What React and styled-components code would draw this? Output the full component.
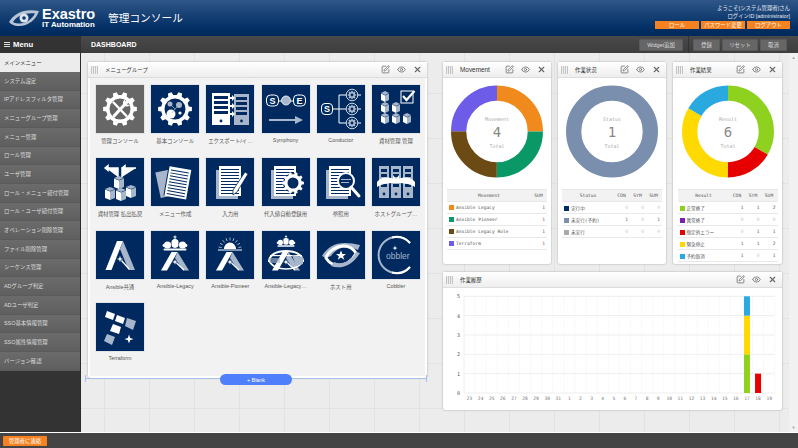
import React from 'react';
import styled, { createGlobalStyle } from 'styled-components';
import { SquarePen, Eye, X } from 'lucide-react';

const SANS = `"Liberation Sans", "Noto Sans CJK JP", sans-serif`;
const MONO = `"DejaVu Sans Mono", "Noto Sans CJK JP", monospace`;
const NAVY = '#002a5f';
const LIGHT = '#a8b6cc';
const WHITE = '#fff';

const GlobalStyle = createGlobalStyle`
  html, body { margin: 0; padding: 0; overflow: hidden; background: #444; }
  * { box-sizing: border-box; }
`;

const Page = styled.div`
  width: 798px;
  height: 448px;
  display: flex;
  flex-direction: column;
  font-family: ${SANS};
  font-size: 5.4px;
`;

const Header = styled.header`
  height: 36px;
  flex: none;
  display: flex;
  justify-content: space-between;
  background: linear-gradient(#2f5687, #033066 75%, #02295a);
  color: #fff;
`;
const Brand = styled.div`
  display: flex;
  align-items: center;
  padding-left: 8px;
`;
const BrandText = styled.div`
  margin-left: 2px;
  font-weight: bold;
  width: 66px;
`;
const BrandName = styled.div`
  font-size: 14.5px;
  line-height: 13px;
  height: 13px;
`;
const BrandStarO = styled.span`
  position: relative;
  &::after {
    content: '★';
    position: absolute;
    left: 2.4px;
    top: 3.6px;
    font: 4px/1 "DejaVu Sans", sans-serif;
    color: #0d3a72;
  }
`;
const BrandSub = styled.div`
  font-size: 7.9px;
  line-height: 8px;
`;
const AppTitle = styled.div`
  font-size: 10.7px;
  margin-top: -1px;
`;
const UserBox = styled.div`
  display: flex;
  flex-direction: column;
  align-items: flex-end;
  padding: 4px 8px 0 0;
  line-height: 8px;
  color: #e4e9f1;
`;
const UserButtons = styled.div`
  display: flex;
  gap: 2px;
  margin-top: 1px;
`;
const OrangeButton = styled.div`
  width: ${p => p.$w}px;
  height: ${p => p.$h}px;
  background: #f5821f;
  color: #fff;
  border-radius: ${p => p.$r || 0}px;
  display: flex;
  align-items: center;
  justify-content: center;
`;

const NavBar = styled.div`
  height: 17px;
  flex: none;
  display: flex;
  background: linear-gradient(#4a4a4a, #3d3d3d);
  color: #fff;
`;
const MenuTitle = styled.div`
  width: 81px;
  display: flex;
  align-items: center;
  gap: 3px;
  padding-left: 4px;
  font-size: 7.7px;
  font-weight: bold;
  background: #333;
`;
const Burger = styled.span`
  width: 6px;
  height: 5px;
  border-top: 1px solid #ddd;
  border-bottom: 1px solid #ddd;
  background: linear-gradient(#ddd, #ddd) center / 100% 1px no-repeat;
`;
const PageName = styled.div`
  flex: 1;
  display: flex;
  align-items: center;
  padding-left: 10px;
  font-size: 7px;
  font-weight: bold;
`;
const ToolGroup = styled.div`
  display: flex;
  align-items: center;
  gap: 2px;
  height: 100%;
  padding: 0 ${p => p.$pr}px 0 ${p => p.$pl}px;
  border-left: ${p => (p.$divided ? '1px solid #333' : 'none')};
`;
const ToolButton = styled.div`
  width: ${p => p.$w}px;
  height: 12px;
  display: flex;
  align-items: center;
  justify-content: center;
  background: #666;
  color: #ddd;
  border: 1px solid #5a5a5a;
  border-radius: 1px;
`;

const Body = styled.div`
  flex: 1;
  min-height: 0;
  display: flex;
`;
const Sidebar = styled.nav`
  width: 81px;
  flex: none;
  background: #333;
  border-right: 1px solid #2c2c2c;
`;
const MainMenuItem = styled.div`
  height: 19px;
  display: flex;
  align-items: center;
  padding-left: 4px;
  background: #ececec;
  color: #333;
`;
const SideItem = styled.div`
  height: 18.67px;
  display: flex;
  align-items: center;
  padding-left: 4px;
  background: linear-gradient(#6b6b6b, #5f5f5f);
  border-bottom: 1px solid #5a5a5a;
  color: #ddd;
  white-space: nowrap;
`;
const Main = styled.main`
  flex: 1;
  display: flex;
  gap: 16px;
  padding: 9px 0 0 7px;
  background-color: #ececec;
  background-image: linear-gradient(#e2e2e2 1px, transparent 1px),
    linear-gradient(90deg, #e2e2e2 1px, transparent 1px);
  background-size: 45px 45px;
  background-position: 23px 40px;
`;
const ScrollBar = styled.div`
  width: 9px;
  flex: none;
  background: #f1f1f1;
  color: #999;
  font-size: 4px;
  display: flex;
  flex-direction: column;
  justify-content: space-between;
  align-items: center;
  padding: 2px 0;
`;
const Footer = styled.footer`
  height: 16px;
  flex: none;
  display: flex;
  align-items: center;
  padding-left: 3px;
  background: #444;
  border-top: 1px solid #fff;
  color: #fff;
`;

const MenuSelection = styled.div`
  position: relative;
  width: 339px;
  height: 316px;
  flex: none;
`;
const Panel = styled.section`
  width: ${p => (p.$w ? `${p.$w}px` : 'auto')};
  height: ${p => (p.$h ? `${p.$h}px` : 'auto')};
  flex: none;
  display: flex;
  flex-direction: column;
  background: #fff;
  border-radius: 2px;
  box-shadow: 0 0 2px rgba(0, 0, 0, 0.35);
`;
const PanelHead = styled.div`
  height: 16px;
  flex: none;
  display: flex;
  align-items: center;
  padding: 0 5px 0 3px;
  background: linear-gradient(#fff, #eee);
  border-bottom: 1px solid #ddd;
  color: #333;
`;
const Grip = styled.span`
  width: 7px;
  height: 8px;
  margin-right: 7px;
  background: repeating-linear-gradient(90deg, #c4c4c4 0 1px, #eee 1px 2px);
`;
const PanelTitle = styled.div`
  flex: 1;
  font-size: ${p => p.$size || 5.4}px;
  white-space: nowrap;
`;
const PanelIcons = styled.div`
  display: flex;
  align-items: center;
  gap: 7px;
  color: #666;
`;
const TileGrid = styled.div`
  flex: 1;
  display: grid;
  grid-template-columns: repeat(6, 48px);
  grid-auto-rows: 72.8px;
  column-gap: 7.2px;
  padding: 7px 0 0 6px;
  margin: 0 2px 2px;
  background: #f2f2f2;
`;
const Tile = styled.div`
  width: 48px;
`;
const TileFace = styled.div`
  width: 48px;
  height: 48px;
  background: ${p => (p.$grey ? '#666' : NAVY)};
  box-shadow: 0 0 0 0.5px #cfd5dd;
  svg { display: block; }
`;
const TileLabel = styled.div`
  width: 55px;
  margin: 4px 0 0 -3.5px;
  text-align: center;
  color: #555;
  white-space: nowrap;
  overflow: hidden;
  text-overflow: ellipsis;
`;
const SelectionLine = styled.div`
  position: absolute;
  left: -3px;
  right: 0;
  bottom: -1px;
  height: 1px;
  background: #a9bfe8;
  &::before, &::after {
    content: '';
    position: absolute;
    top: -3px;
    width: 1px;
    height: 7px;
    background: #a9bfe8;
  }
  &::before { left: 0; }
  &::after { right: 0; }
`;
const BlankButton = styled.div`
  position: absolute;
  left: 132px;
  bottom: -7px;
  width: 72px;
  height: 11px;
  display: flex;
  align-items: center;
  justify-content: center;
  border-radius: 6px;
  background: #4f7ffb;
  color: #fff;
`;

const Column = styled.div`
  width: 339px;
  flex: none;
  display: flex;
  flex-direction: column;
  gap: 8px;
`;
const WidgetRow = styled.div`
  display: flex;
  gap: 7px;
`;
const WidgetBody = styled.div`
  flex: 1;
  display: flex;
  flex-direction: column;
  align-items: center;
  padding-top: 7px;
  svg { display: block; }
`;
const Legend = styled.table`
  width: 100px;
  margin-top: 11px;
  border-collapse: collapse;
  table-layout: fixed;
  font-family: ${MONO};
  font-size: 4.6px;
  color: #555;
`;
const LegendHead = styled.th`
  height: 12px;
  padding: 0 ${p => (p.$num ? 1 : 0)}px 0 0;
  width: ${p => (p.$num ? '16px' : 'auto')};
  font-weight: normal;
  text-align: center;
  background: #f2f2f2;
  border-top: 1px solid #e6e6e6;
`;
const LegendRow = styled.tr`
  height: 12px;
  border-top: 1px solid #e8e8e8;
  border-bottom: 1px solid #e8e8e8;
`;
const LegendName = styled.td`
  padding: 0 0 0 2px;
  white-space: nowrap;
  font-family: ${MONO};
`;
const Swatch = styled.span`
  display: inline-block;
  width: 5px;
  height: 5px;
  margin-right: 2px;
  vertical-align: -1px;
  background: ${p => p.$color};
`;
const LegendValue = styled.td`
  padding: 0 2px 0 0;
  text-align: right;
  color: ${p => (p.$zero ? '#ccc' : '#555')};
`;

const gearPath = (cx, cy, outer, root, hole, teeth) => {
  const pts = [];
  const step = (Math.PI * 2) / teeth;
  for (let i = 0; i < teeth; i++) {
    const a = i * step;
    [[-0.3, root], [-0.18, outer], [0.18, outer], [0.3, root]].forEach(([o, r]) => {
      pts.push(`${(cx + r * Math.cos(a + o * step)).toFixed(2)} ${(cy + r * Math.sin(a + o * step)).toFixed(2)}`);
    });
  }
  const ring = `M${cx - hole} ${cy}a${hole} ${hole} 0 1 0 ${hole * 2} 0a${hole} ${hole} 0 1 0 ${-hole * 2} 0Z`;
  return `M${pts.join('L')}Z${ring}`;
};

const Gear = ({ cx = 24, cy = 24, outer = 17, root = 14, hole = 10.5, teeth = 10, fill = WHITE }) => (
  <path d={gearPath(cx, cy, outer, root, hole, teeth)} fill={fill} fillRule="evenodd" />
);

const Sparkle = ({ x, y, r = 3, fill = WHITE }) => (
  <path
    d={`M${x} ${y - r}L${x + r * 0.25} ${y - r * 0.25}L${x + r} ${y}L${x + r * 0.25} ${y + r * 0.25}L${x} ${y + r}L${x - r * 0.25} ${y + r * 0.25}L${x - r} ${y}L${x - r * 0.25} ${y - r * 0.25}Z`}
    fill={fill}
  />
);

const Cube = ({ x, y, s = 7, fill = WHITE }) => (
  <g>
    <path d={`M${x} ${y + 2}L${x + s / 2} ${y}L${x + s} ${y + 2}L${x + s / 2} ${y + 4}Z`} fill={LIGHT} />
    <path d={`M${x} ${y + 2.6}L${x + s / 2} ${y + 4.6}V${y + s + 3}L${x} ${y + s + 1}Z`} fill={fill} />
    <path d={`M${x + s} ${y + 2.6}L${x + s / 2} ${y + 4.6}V${y + s + 3}L${x + s} ${y + s + 1}Z`} fill={LIGHT} />
  </g>
);

const Doc = ({ x, y, w = 20, h = 26, lines = 7 }) => (
  <g>
    <rect x={x} y={y} width={w} height={h} fill={WHITE} />
    {Array.from({ length: lines }, (_, i) => (
      <rect key={i} x={x + 2} y={y + 3 + i * 3} width={w - 4} height="1" fill={NAVY} />
    ))}
  </g>
);

// plain A: full height, thin legs
const AMark = () => (
  <g>
    <path d="M21 10H27L15.5 39H9.5Z" fill={WHITE} />
    <path d="M27 10L39 39H32.5L24 18Z" fill={LIGHT} />
    <Sparkle x={24} y={28} r={3.2} />
    <path d="M25.5 29.5L33 38" stroke={WHITE} strokeWidth="1.3" />
  </g>
);

// shorter A, sits under a crown or sun
const ShortA = () => (
  <g>
    <path d="M20.5 21H26.5L16 39.5H10Z" fill={WHITE} />
    <path d="M26.5 21L38 39.5H32L24 27Z" fill={LIGHT} />
    <Sparkle x={24} y={31} r={2.8} />
    <path d="M25.5 32L33 39" stroke={WHITE} strokeWidth="1.2" />
  </g>
);

const Crown = ({ dy = 0, s = 1 }) => (
  <g transform={`translate(24 ${dy}) scale(${s}) translate(-24 0)`}>
    <path d="M24 4.5V9M22.5 6H25.5" stroke={WHITE} strokeWidth="1" />
    <circle cx="24" cy="12.5" r="4.4" fill={WHITE} />
    <circle cx="16.5" cy="14" r="3.6" fill={WHITE} />
    <circle cx="31.5" cy="14" r="3.6" fill={WHITE} />
    <circle cx="13" cy="14.5" r="1.4" fill={WHITE} />
    <circle cx="35" cy="14.5" r="1.4" fill={WHITE} />
    <path d="M20.4 9.5V16.5M27.6 9.5V16.5" stroke={NAVY} strokeWidth="0.6" />
    <rect x="12.5" y="17.5" width="23" height="2" rx="1" fill={WHITE} />
  </g>
);

const EyeMark = ({ star = true }) => (
  <g>
    <path d="M5 25C12 13 24 9 43 14L41 19C30 14 20 16 14 25L9 27Z" fill={LIGHT} />
    <path d="M9 27C10 22 18 15 27 15C33 15 37 19 39 22C36 30 27 36 18 34C14 33 11 30 9 27Z" fill="none" stroke={WHITE} strokeWidth="3" />
    <path d="M43 22C36 34 24 39 14 35L17 31C26 35 35 29 39 21Z" fill={LIGHT} />
    {star && <path d="M24 19.5L25.4 23H29L26.1 25.2L27.2 28.8L24 26.6L20.8 28.8L21.9 25.2L19 23H22.6Z" fill={WHITE} />}
  </g>
);

const Svg = ({ children, size = 48, view = 48 }) => (
  <svg width={size} height={size} viewBox={`0 0 ${view} ${view}`}>{children}</svg>
);

const Rack = ({ x, y, w, h, fill, stripe }) => (
  <g>
    <rect x={x} y={y} width={w} height={h} fill={fill} />
    {[3, 8, 13, 18].map(o => (
      <rect key={o} x={x + 2} y={y + o} width={w - 4} height="3" fill={stripe} />
    ))}
    <circle cx={x + w / 2} cy={y + h - 4} r="1.4" fill={stripe} />
  </g>
);

const ICONS = {
  admin: (
    <Svg>
      <Gear />
      <path d="M18 31L31 17" stroke={WHITE} strokeWidth="3.2" strokeLinecap="round" />
      <path d="M17.5 17.5L30.5 31" stroke={WHITE} strokeWidth="2.4" strokeLinecap="round" />
      <path d="M28.5 14.5A4.5 4.5 0 0 0 28 20.5A4.5 4.5 0 0 0 34 20L31 19.5L30 17Z" fill={WHITE} />
    </Svg>
  ),
  basic: (
    <Svg>
      <Gear />
      <circle cx="20" cy="29" r="4.5" fill={WHITE} />
      <circle cx="19" cy="19" r="2.5" fill={LIGHT} />
      <circle cx="28" cy="20" r="3" fill={LIGHT} />
      <circle cx="29" cy="28" r="1.6" fill={WHITE} />
      <path d="M19 19L24 24L28 20M24 24L21 28" stroke={LIGHT} strokeWidth="0.7" fill="none" />
    </Svg>
  ),
  exportImport: (
    <Svg>
      <Rack x={6} y={8} w={18} h={32} fill={WHITE} stripe={NAVY} />
      <Rack x={28} y={9} w={15} h={31} fill={LIGHT} stripe={NAVY} />
      {[12, 20, 28].map(y => (
        <path key={y} d={`M24 ${y}h2v-2l3 3l-3 3v-2h-2Z`} fill={WHITE} />
      ))}
    </Svg>
  ),
  symphony: (
    <Svg>
      <path d="M11 16H37" stroke={WHITE} strokeWidth="1" />
      <rect x="4.5" y="10" width="12" height="11" rx="4" fill={NAVY} stroke={WHITE} strokeWidth="1" />
      <text x="10.5" y="18.5" fontSize="9" fontWeight="bold" textAnchor="middle" fill={WHITE} fontFamily={SANS}>S</text>
      <circle cx="24" cy="15.5" r="4.5" fill={LIGHT} stroke={WHITE} strokeWidth="0.8" />
      <rect x="31.5" y="10" width="12" height="11" rx="4" fill={NAVY} stroke={WHITE} strokeWidth="1" />
      <text x="37.5" y="18.5" fontSize="9" fontWeight="bold" textAnchor="middle" fill={WHITE} fontFamily={SANS}>E</text>
      <path d="M7 34H33V31L41 35L33 39V36H7Z" fill={LIGHT} />
    </Svg>
  ),
  conductor: (
    <Svg>
      <rect x="4.5" y="18.5" width="11" height="11" rx="3.5" fill={NAVY} stroke={WHITE} strokeWidth="1" />
      <text x="10" y="27" fontSize="9" fontWeight="bold" textAnchor="middle" fill={WHITE} fontFamily={SANS}>S</text>
      <path d="M15.5 24H30M22 10V38M22 10H30M22 38H30M37 10h7M37 24h7M37 38h7" stroke={WHITE} strokeWidth="1" fill="none" />
      {[10, 24, 38].map(y => (
        <g key={y}>
          <circle cx="35" cy={y} r="5.8" fill={NAVY} stroke={WHITE} strokeWidth="0.8" />
          <Gear cx={35} cy={y} outer={4.4} root={3.4} hole={1.4} teeth={8} fill={LIGHT} />
        </g>
      ))}
    </Svg>
  ),
  materials: (
    <Svg>
      <Cube x={9} y={6} s={8} />
      <Cube x={9} y={17} s={8} />
      <Cube x={9} y={28} s={8} />
      <Cube x={20} y={17} s={8} />
      <Cube x={20} y={28} s={8} />
      <Cube x={31} y={28} s={8} />
      <rect x="29" y="6" width="12" height="12" fill="none" stroke={WHITE} strokeWidth="1" />
      <path d="M31 11l3.5 4l8 -9" stroke={WHITE} strokeWidth="2.2" fill="none" />
    </Svg>
  ),
  materialsOut: (
    <Svg>
      <path d="M22 19V10H10M9 10l3 -2.5v5Z" stroke={WHITE} strokeWidth="1.5" fill={WHITE} />
      <path d="M26 19V10H40M26 10l3 -2.5v5Z" stroke={WHITE} strokeWidth="1.5" fill={WHITE} />
      <Cube x={18} y={18} s={10} />
      <Cube x={9} y={29} s={10} />
      <Cube x={20} y={30} s={10} />
      <Cube x={30} y={27} s={10} />
    </Svg>
  ),
  menuCreate: (
    <Svg>
      <g transform="rotate(-12 18 26)"><rect x="7" y="12" width="20" height="26" fill={LIGHT} /></g>
      <g transform="rotate(10 28 24)"><rect x="15" y="9" width="23" height="31" fill={NAVY} /><Doc x={16} y={10} w={22} h={30} lines={9} /></g>
    </Svg>
  ),
  input: (
    <Svg>
      <rect x="10" y="12" width="22" height="29" fill={LIGHT} />
      <Doc x={13} y={8} w={22} h={30} lines={9} />
      <path d="M39 14l3 2l-11 18l-4 3l0 -5z" fill={WHITE} stroke={NAVY} strokeWidth="0.8" />
    </Svg>
  ),
  substitute: (
    <Svg>
      <rect x="9" y="12" width="22" height="29" fill={LIGHT} />
      <Doc x={12} y={8} w={22} h={30} lines={9} />
      <circle cx="31" cy="25" r="10" fill={NAVY} />
      <Gear cx={31} cy={25} outer={11} root={8.8} hole={5.5} teeth={10} />
    </Svg>
  ),
  reference: (
    <Svg>
      <rect x="9" y="12" width="22" height="29" fill={LIGHT} />
      <Doc x={12} y={8} w={22} h={30} lines={9} />
      <circle cx="29" cy="23" r="8" fill={NAVY} stroke={WHITE} strokeWidth="2" />
      <rect x="24" y="21" width="10" height="1" fill={LIGHT} />
      <rect x="24" y="24" width="8" height="1" fill={LIGHT} />
      <path d="M34 29L42 38" stroke={WHITE} strokeWidth="3" strokeLinecap="round" />
    </Svg>
  ),
  hostGroup: (
    <Svg>
      <Rack x={7} y={8} w={10} h={32} fill={LIGHT} stripe={NAVY} />
      <Rack x={19} y={8} w={10} h={32} fill={LIGHT} stripe={NAVY} />
      <Rack x={31} y={8} w={10} h={32} fill={LIGHT} stripe={NAVY} />
      <path d="M5 24C10 18 19 19 24 22C29 19 38 18 43 24V29C37 25 29 25 24 25C19 25 11 25 5 29Z" fill={WHITE} />
      <path d="M21 17l3 4l3 -4l0 6l-3 -1l-3 1z" fill={WHITE} />
    </Svg>
  ),
  ansible: <Svg><AMark /></Svg>,
  legacy: (
    <Svg>
      <Crown />
      <ShortA />
    </Svg>
  ),
  pioneer: (
    <Svg>
      <path d="M18 18a6 6.5 0 0 1 12 0Z" fill={WHITE} />
      {[-80, -60, -40, -20, 0, 20, 40, 60, 80].map(a => (
        <path key={a} d="M24 6.5V9.5" stroke={WHITE} strokeWidth="0.6" transform={`rotate(${a} 24 18)`} />
      ))}
      <rect x="12" y="18.5" width="24" height="1" fill={WHITE} />
      <ShortA />
    </Svg>
  ),
  legacyRole: (
    <Svg>
      <Crown dy={1} s={0.75} />
      <ShortA />
      <path d="M7 31C7 24 14 20 24 20C34 20 41 24 41 31" fill="none" stroke={WHITE} strokeWidth="2" />
      <path d="M7 29C9 36 18 38 24 38C30 38 39 36 41 29" fill="none" stroke={WHITE} strokeWidth="1.6" />
      <rect x="8" y="24" width="32" height="1.2" fill={WHITE} />
      <path d="M30 24L41 26V33L34 35Z" fill={LIGHT} />
      <path d="M7 27H18V32H8Z" fill={LIGHT} opacity="0.6" />
    </Svg>
  ),
  host: <Svg><EyeMark /></Svg>,
  cobbler: (
    <Svg>
      <path d="M38 12A18 18 0 1 0 38 36" fill="none" stroke={LIGHT} strokeWidth="2" />
      <path d="M38 12A18 18 0 0 0 20 6.5" fill="none" stroke={WHITE} strokeWidth="2" />
      <path d="M38 36A18 18 0 0 1 20 41.5" fill="none" stroke={WHITE} strokeWidth="2" />
      <text x="14" y="28" fontSize="8.5" fill={LIGHT} fontFamily={SANS}>obbler</text>
      <Sparkle x={23} y={17} r={2.5} />
    </Svg>
  ),
  terraform: (
    <Svg>
      <path d="M11 8L19 11L17 17L9 14Z" fill={WHITE} />
      <path d="M21 12L29 15L27 21L19 18Z" fill={WHITE} />
      <path d="M31 15L40 18L37 27L29 23Z" fill={LIGHT} />
      <path d="M17 21L25 24L23 31L14 28Z" fill={WHITE} />
      <path d="M11 31L19 34L16 42L8 38Z" fill={LIGHT} />
      <Sparkle x={33} y={36} r={4.5} />
    </Svg>
  ),
};

const TILES = [
  ['管理コンソール', 'admin', true],
  ['基本コンソール', 'basic'],
  ['エクスポート/イ…', 'exportImport'],
  ['Symphony', 'symphony'],
  ['Conductor', 'conductor'],
  ['資材管理 管理', 'materials'],
  ['資材管理 払出払戻', 'materialsOut'],
  ['メニュー作成', 'menuCreate'],
  ['入力用', 'input'],
  ['代入値自動登録用', 'substitute'],
  ['参照用', 'reference'],
  ['ホストグループ…', 'hostGroup'],
  ['Ansible共通', 'ansible'],
  ['Ansible-Legacy', 'legacy'],
  ['Ansible-Pioneer', 'pioneer'],
  ['Ansible-Legacy…', 'legacyRole'],
  ['ホスト用', 'host'],
  ['Cobbler', 'cobbler'],
  ['Terraform', 'terraform'],
];

const SIDE_ITEMS = [
  'システム設定', 'IPアドレスフィルタ管理', 'メニューグループ管理', 'メニュー管理', 'ロール管理', 'ユーザ管理',
  'ロール・メニュー紐付管理', 'ロール・ユーザ紐付管理', 'オペレーション削除管理', 'ファイル削除管理', 'シーケンス管理',
  'ADグループ判定', 'ADユーザ判定', 'SSO基本情報管理', 'SSO属性情報管理', 'バージョン確認',
];

const C = {
  orange: '#f08a1d', green: '#0a9966', brown: '#6b4a14', purple: '#6c5ce7',
  navy: '#002b62', slate: '#7a8fae', grey: '#aaa',
  lime: '#8fd11f', violet: '#7a1fb0', red: '#e60000', yellow: '#ffd900', sky: '#2aa9e0',
};

const WIDGETS = [
  {
    title: 'Movement', w: 108, size: 6.4, name: 'Movement', total: 4, nums: ['SUM'],
    rows: [
      ['Ansible Legacy', C.orange, [1], 1],
      ['Ansible Pioneer', C.green, [1], 1],
      ['Ansible Legacy Role', C.brown, [1], 1],
      ['Terraform', C.purple, [1], 1],
    ],
  },
  {
    title: '作業状況', w: 108, name: 'Status', total: 1, nums: ['CON', 'SYM', 'SUM'],
    rows: [
      ['実行中', C.navy, [0, 0, 0], 0],
      ['未実行(予約)', C.slate, [1, 0, 1], 1],
      ['未実行', C.grey, [0, 0, 0], 0],
    ],
  },
  {
    title: '作業結果', w: 109, name: 'Result', total: 6, nums: ['CON', 'SYM', 'SUM'],
    rows: [
      ['正常終了', C.lime, [1, 1, 2], 2],
      ['異常終了', C.violet, [0, 0, 0], 0],
      ['想定外エラー', C.red, [0, 1, 1], 1],
      ['緊急停止', C.yellow, [1, 1, 2], 2],
      ['予約取消', C.sky, [1, 0, 1], 1],
    ],
  },
];

const PanelTools = () => (
  <PanelIcons>
    <SquarePen size={9} strokeWidth={2} />
    <Eye size={9} strokeWidth={2} />
    <X size={9} strokeWidth={3} />
  </PanelIcons>
);

const Donut = ({ rows, name, total }) => {
  const r = 38.35;
  const circ = 2 * Math.PI * r;
  let offset = 0;
  return (
    <svg width="92" height="93" viewBox="0 0 92 93">
      {rows.filter(row => row[3] > 0).map(([label, color, , value]) => {
        const len = (value / total) * circ;
        const seg = (
          <circle
            key={label}
            cx="46"
            cy="46.5"
            r={r}
            fill="none"
            stroke={color}
            strokeWidth="15.3"
            strokeDasharray={`${len} ${circ - len}`}
            strokeDashoffset={-offset}
            transform="rotate(-90 46 46.5)"
          />
        );
        offset += len;
        return seg;
      })}
      <g fontFamily={MONO} textAnchor="middle" fill="#aaa">
        <text x="46" y="35.5" fontSize="5">{name}</text>
        <text x="46" y="52" fontSize="14" fill="#888">{total}</text>
        <text x="46" y="63" fontSize="5">Total</text>
      </g>
    </svg>
  );
};

const Widget = ({ title, w, size, name, total, nums, rows }) => (
  <Panel $w={w} $h={202}>
    <PanelHead>
      <Grip />
      <PanelTitle $size={size}>{title}</PanelTitle>
      <PanelTools />
    </PanelHead>
    <WidgetBody>
      <Donut rows={rows} name={name} total={total} />
      <Legend>
        <thead>
          <tr>
            <LegendHead>{name}</LegendHead>
            {nums.map(n => <LegendHead key={n} $num>{n}</LegendHead>)}
          </tr>
        </thead>
        <tbody>
          {rows.map(([label, color, values]) => (
            <LegendRow key={label}>
              <LegendName><Swatch $color={color} />{label}</LegendName>
              {values.map((v, i) => <LegendValue key={i} $zero={v === 0}>{v}</LegendValue>)}
            </LegendRow>
          ))}
        </tbody>
      </Legend>
    </WidgetBody>
  </Panel>
);

const DAYS = [23, 24, 25, 26, 27, 28, 29, 30, 31, 1, 2, 3, 4, 5, 6, 7, 8, 9, 10, 11, 12, 13, 14, 15, 16, 17, 18, 19];

const HistoryChart = () => {
  const left = 21;
  const right = 331.7;
  const zero = 105;
  const unit = 19.34;
  const step = (right - left) / DAYS.length;
  const x17 = left + step * 25.5 - 3;
  const x18 = left + step * 26.5 - 3;
  return (
    <svg width="338" height="121" viewBox="0 0 338 121">
      {DAYS.map((d, i) => (
        <g key={i}>
          <path d={`M${left + step * (i + 1)} ${zero - unit * 5}V${zero}`} stroke="#eee" strokeWidth="0.7" strokeDasharray="1.5 1.5" />
          <text x={left + step * (i + 0.5)} y={zero + 7} fontSize="4.6" textAnchor="middle" fill="#777" fontFamily={MONO}>{d}</text>
        </g>
      ))}
      {[0, 1, 2, 3, 4, 5].map(v => (
        <g key={v}>
          <path d={`M${left} ${zero - v * unit}H${right}`} stroke="#eee" strokeWidth="1" />
          <text x={left - 4} y={zero - v * unit + 2} fontSize="5" textAnchor="end" fill="#555" fontFamily={MONO}>{v}</text>
        </g>
      ))}
      <path d={`M${left} ${zero - 5 * unit}V${zero}`} stroke="#eee" strokeWidth="1" />
      <rect x={x17} y={zero - unit * 2} width="6" height={unit * 2} fill={C.lime} />
      <rect x={x17} y={zero - unit * 4} width="6" height={unit * 2} fill={C.yellow} />
      <rect x={x17} y={zero - unit * 5} width="6" height={unit} fill={C.sky} />
      <rect x={x18} y={zero - unit} width="6" height={unit} fill={C.red} />
    </svg>
  );
};

const ChartBody = styled.div`
  flex: 1;
  svg { display: block; }
`;

export default function App() {
  return (
    <Page>
      <GlobalStyle />
      <Header>
        <Brand>
          <svg width="32" height="24" viewBox="0 0 32 24">
            <path d="M1 16C6 7 17 2 31 5C28 14 19 21 9 20C5 19.5 3 18 1 16Z" fill="#b9c4d4" />
            <path d="M5 16C9 10 17 6.5 27 7.5C24 13 18 18 10 17.5C8 17.3 6.5 17 5 16Z" fill="#0d3a72" />
            <circle cx="16" cy="12" r="4.5" fill="#dfe5ee" />
            <circle cx="16" cy="12" r="1.8" fill="#0d3a72" />
          </svg>
          <BrandText>
            <BrandName>Exastr<BrandStarO>o</BrandStarO></BrandName>
            <BrandSub>IT Automation</BrandSub>
          </BrandText>
          <AppTitle>管理コンソール</AppTitle>
        </Brand>
        <UserBox>
          <div>ようこそ[システム管理者]さん</div>
          <div>ログインID [administrator]</div>
          <UserButtons>
            <OrangeButton $w={44} $h={8}>ロール</OrangeButton>
            <OrangeButton $w={44} $h={8}>パスワード変更</OrangeButton>
            <OrangeButton $w={43} $h={8}>ログアウト</OrangeButton>
          </UserButtons>
        </UserBox>
      </Header>
      <NavBar>
        <MenuTitle><Burger />Menu</MenuTitle>
        <PageName>DASHBOARD</PageName>
        <ToolGroup $pl={0} $pr={5}>
          <ToolButton $w={44}>Widget追加</ToolButton>
        </ToolGroup>
        <ToolGroup $divided $pl={4} $pr={11}>
          <ToolButton $w={27}>登録</ToolButton>
          <ToolButton $w={36}>リセット</ToolButton>
          <ToolButton $w={27}>取消</ToolButton>
        </ToolGroup>
      </NavBar>
      <Body>
        <Sidebar>
          <MainMenuItem>メインメニュー</MainMenuItem>
          {SIDE_ITEMS.map(item => <SideItem key={item}>{item}</SideItem>)}
        </Sidebar>
        <Main>
          <MenuSelection>
            <Panel $h={316}>
              <PanelHead>
                <Grip />
                <PanelTitle>メニューグループ</PanelTitle>
                <PanelTools />
              </PanelHead>
              <TileGrid>
                {TILES.map(([label, icon, grey]) => (
                  <Tile key={label}>
                    <TileFace $grey={grey}>{ICONS[icon]}</TileFace>
                    <TileLabel>{label}</TileLabel>
                  </Tile>
                ))}
              </TileGrid>
            </Panel>
            <SelectionLine />
            <BlankButton>+ Blank</BlankButton>
          </MenuSelection>
          <Column>
            <WidgetRow>
              {WIDGETS.map(w => <Widget key={w.name} {...w} />)}
            </WidgetRow>
            <Panel $h={138}>
              <PanelHead>
                <Grip />
                <PanelTitle>作業履歴</PanelTitle>
                <PanelTools />
              </PanelHead>
              <ChartBody><HistoryChart /></ChartBody>
            </Panel>
          </Column>
        </Main>
        <ScrollBar>
          <span>▲</span>
          <span>▼</span>
        </ScrollBar>
      </Body>
      <Footer>
        <OrangeButton $w={44} $h={10} $r={1}>管理者に連絡</OrangeButton>
      </Footer>
    </Page>
  );
}
